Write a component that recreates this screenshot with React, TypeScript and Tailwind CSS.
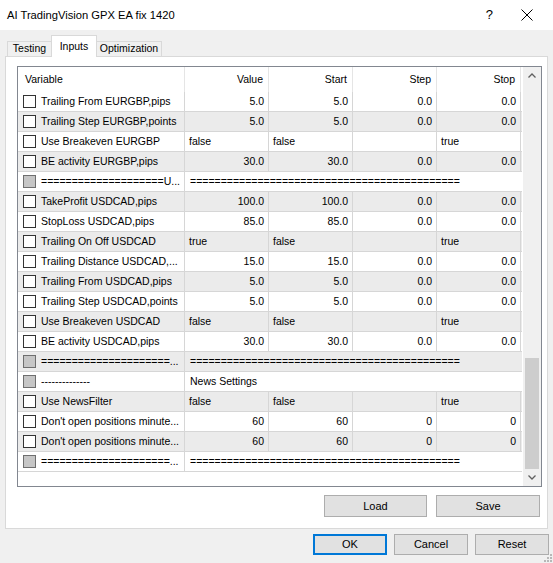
import React from "react";

type Row =
  | { kind: "num"; name: string; v: string[] }
  | { kind: "text"; name: string; v: string[] }
  | { kind: "sep"; name: string; span: string };

const EQ = "=".repeat(44);

const rows: Row[] = [
  { kind: "num", name: "Trailing From EURGBP,pips", v: ["5.0", "5.0", "0.0", "0.0"] },
  { kind: "num", name: "Trailing Step EURGBP,points", v: ["5.0", "5.0", "0.0", "0.0"] },
  { kind: "text", name: "Use Breakeven EURGBP", v: ["false", "false", "", "true"] },
  { kind: "num", name: "BE activity EURGBP,pips", v: ["30.0", "30.0", "0.0", "0.0"] },
  { kind: "sep", name: "====================U...", span: EQ },
  { kind: "num", name: "TakeProfit USDCAD,pips", v: ["100.0", "100.0", "0.0", "0.0"] },
  { kind: "num", name: "StopLoss USDCAD,pips", v: ["85.0", "85.0", "0.0", "0.0"] },
  { kind: "text", name: "Trailing On Off USDCAD", v: ["true", "false", "", "true"] },
  { kind: "num", name: "Trailing Distance USDCAD,...", v: ["15.0", "15.0", "0.0", "0.0"] },
  { kind: "num", name: "Trailing From USDCAD,pips", v: ["5.0", "5.0", "0.0", "0.0"] },
  { kind: "num", name: "Trailing Step USDCAD,points", v: ["5.0", "5.0", "0.0", "0.0"] },
  { kind: "text", name: "Use Breakeven USDCAD", v: ["false", "false", "", "true"] },
  { kind: "num", name: "BE activity USDCAD,pips", v: ["30.0", "30.0", "0.0", "0.0"] },
  { kind: "sep", name: "=====================...", span: EQ },
  { kind: "sep", name: "--------------", span: "News Settings" },
  { kind: "text", name: "Use NewsFilter", v: ["false", "false", "", "true"] },
  { kind: "num", name: "Don't open positions minute...", v: ["60", "60", "0", "0"] },
  { kind: "num", name: "Don't open positions minute...", v: ["60", "60", "0", "0"] },
  { kind: "sep", name: "=====================...", span: EQ },
];

function Check({ grey }: { grey?: boolean }) {
  return (
    <span
      className={
        grey
          ? "w-[13px] h-[13px] shrink-0 border border-[#6e6e6e] bg-[#c6c6c6]"
          : "w-[13px] h-[13px] shrink-0 border border-[#333333] bg-white"
      }
    />
  );
}

function Btn({ label, primary, w }: { label: string; primary?: boolean; w: string }) {
  return (
    <div
      className={`${w} flex items-center justify-center bg-[#e1e1e1] text-[11px] text-black ${
        primary ? "border-2 border-[#0078d7]" : "border border-[#adadad]"
      }`}
    >
      {label}
    </div>
  );
}

function Table() {
  return (
    <div className="w-[504px] flex flex-col text-[10.5px]">
      <div className="h-[25px] flex items-center text-black">
        <div className="w-[167px] h-full flex items-center pl-[7px] border-r border-[#e5e5e5]">Variable</div>
        {["Value", "Start", "Step", "Stop"].map((h) => (
          <div key={h} className="w-[84px] h-full flex items-center justify-end pr-[5px] border-r border-[#e5e5e5]">
            {h}
          </div>
        ))}
      </div>
      {rows.map((r, i) => (
        <div
          key={i}
          className={`h-[20px] flex border-b border-[#d6d6d6] text-black ${
            i % 2 === 1 ? "bg-[#ebebeb]" : "bg-white"
          }`}
        >
          <div className="w-[167px] flex items-center gap-[5px] pl-[5px] border-r border-[#d6d6d6] whitespace-nowrap overflow-hidden">
            <Check grey={r.kind === "sep"} />
            <span>{r.name}</span>
          </div>
          {r.kind === "sep" ? (
            <div className="w-[336px] flex items-center pl-[5px] whitespace-nowrap overflow-hidden">{r.span}</div>
          ) : (
            r.v.map((v, j) => (
              <div
                key={j}
                className={`w-[84px] flex items-center border-r border-[#d6d6d6] whitespace-nowrap ${
                  r.kind === "num" ? "justify-end pr-[4px]" : "pl-[4px]"
                }`}
              >
                {v}
              </div>
            ))
          )}
        </div>
      ))}
    </div>
  );
}

function Scrollbar() {
  return (
    <div className="w-[18px] bg-[#f0f0f0] flex flex-col">
      <div className="h-[17px] flex items-center justify-center">
        <svg width="8" height="5" viewBox="0 0 8 5">
          <path d="M0.5 4.5 L4 1 L7.5 4.5" fill="none" stroke="#606060" strokeWidth="1.3" />
        </svg>
      </div>
      <div className="flex-1 flex flex-col justify-end">
        <div className="h-[111px] mx-[2px] bg-[#cdcdcd]" />
      </div>
      <div className="h-[17px] flex items-center justify-center">
        <svg width="8" height="5" viewBox="0 0 8 5">
          <path d="M0.5 0.5 L4 4 L7.5 0.5" fill="none" stroke="#606060" strokeWidth="1.3" />
        </svg>
      </div>
    </div>
  );
}

export default function App() {
  return (
    <div className="w-[553px] h-[563px] bg-[#f0f0f0] flex flex-col relative overflow-hidden font-['Liberation_Sans',Arial,sans-serif] text-black">
      <div className="h-[30px] bg-white flex items-center pl-[7px] pr-[20px] text-[11px]">
        <span className="flex-1 text-[11.2px]">AI TradingVision GPX EA fix 1420</span>
        <span className="text-[13px] mr-[28px]">?</span>
        <svg width="12" height="12" viewBox="0 0 12 12">
          <path d="M0.5 0.5 L11.5 11.5 M11.5 0.5 L0.5 11.5" stroke="#000" strokeWidth="1" />
        </svg>
      </div>

      <div className="h-[26px] flex items-end pl-[7px] text-[10.5px] relative z-10">
        <div className="h-[15px] w-[45px] border border-b-0 border-[#d9d9d9] bg-[#f0f0f0] flex items-center justify-center mr-[-1px]">
          Testing
        </div>
        <div className="h-[22px] w-[46px] border border-b-0 border-[#d9d9d9] bg-white flex items-start pt-[3px] justify-center mb-[-1px]">
          Inputs
        </div>
        <div className="h-[15px] w-[66px] border border-b-0 border-[#d9d9d9] bg-[#f0f0f0] flex items-center justify-center ml-[-1px]">
          Optimization
        </div>
      </div>

      <div className="mx-[5px] h-[473px] bg-white border border-[#d9d9d9] flex flex-col pl-[11px] pr-[7px] pt-[9px]">
        <div className="w-[525px] h-[421px] border border-[#828790] flex">
          <div className="flex-1 overflow-hidden">
            <Table />
          </div>
          <Scrollbar />
        </div>
        <div className="flex justify-end gap-[9px] mt-[8px]">
          <Btn label="Load" w="w-[103px] h-[22px]" />
          <Btn label="Save" w="w-[104px] h-[22px]" />
        </div>
      </div>

      <div className="flex justify-end gap-[7px] mt-[5px] pr-[4px]">
        <Btn label="OK" primary w="w-[74px] h-[21px]" />
        <Btn label="Cancel" w="w-[74px] h-[21px]" />
        <Btn label="Reset" w="w-[74px] h-[21px]" />
      </div>

      <svg className="absolute right-[1px] bottom-[1px]" width="8" height="8" viewBox="0 0 8 8">
        {[
          [6, 0], [6, 3], [3, 3], [6, 6], [3, 6], [0, 6],
        ].map(([x, y], k) => (
          <rect key={k} x={x} y={y} width="2" height="2" fill="#b8b8b8" />
        ))}
      </svg>
    </div>
  );
}
